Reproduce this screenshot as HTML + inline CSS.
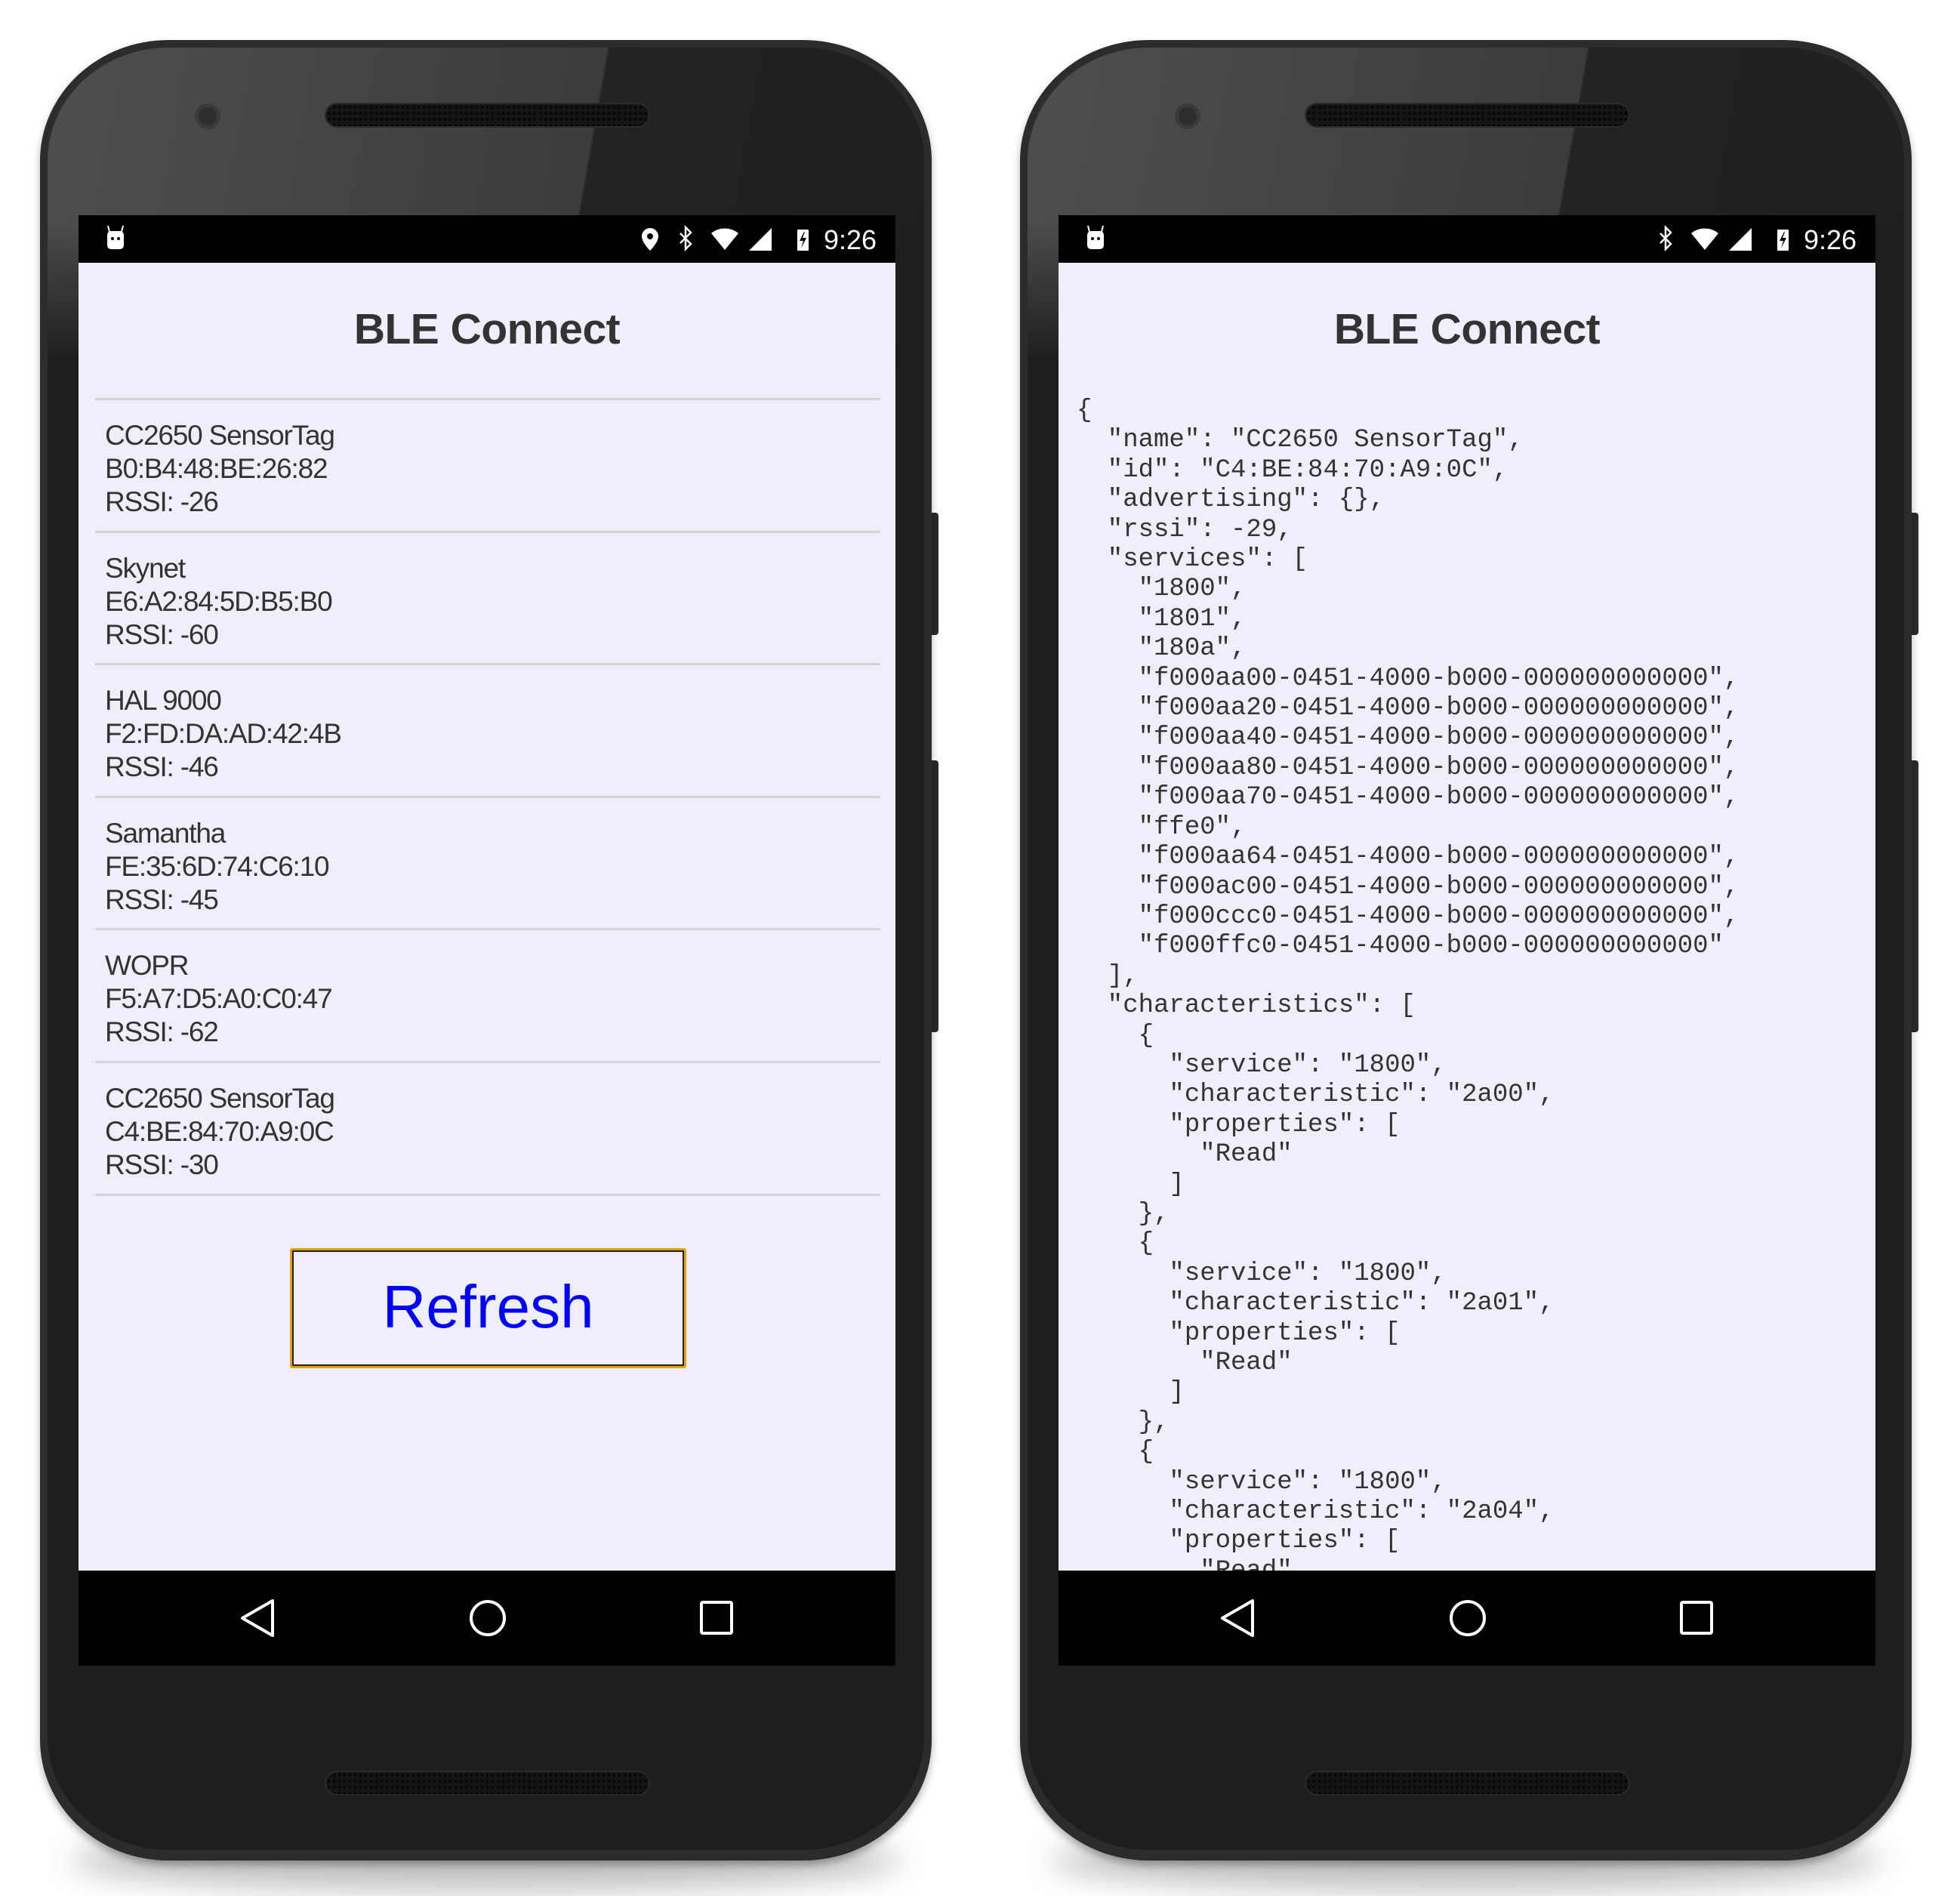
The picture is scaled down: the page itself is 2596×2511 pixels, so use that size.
<!DOCTYPE html>
<html><head><meta charset="utf-8"><style>
*{margin:0;padding:0;box-sizing:border-box}
body{width:2596px;height:2511px;background:#fff;position:relative;overflow:hidden;font-family:"Liberation Sans",sans-serif}
.phone{position:absolute;top:53px;width:1181px;height:2411px}
.shadow{position:absolute;left:40px;right:40px;bottom:-40px;height:80px;border-radius:50%;background:rgba(0,0,0,0.25);filter:blur(20px)}
.body{position:absolute;inset:0;border-radius:170px/160px;background:#2c2c2c;box-shadow:0 6px 10px rgba(0,0,0,.3)}
.face{position:absolute;left:10px;top:10px;right:10px;bottom:14px;border-radius:160px/150px;background:#1e1e1e;overflow:hidden}
.hl{position:absolute;left:0;top:0;width:100%;height:420px;background:linear-gradient(100deg,#4e4e4e 0%,#3c3c3c 60%,#232323 60.3%,#1f1f1f 100%);-webkit-mask-image:linear-gradient(to bottom,#000 55%,transparent 100%);mask-image:linear-gradient(to bottom,#000 55%,transparent 100%)}
.spk{position:absolute;left:377px;width:431px;height:33px;border-radius:17px;background:#151515;border:2px solid #2a2a2a;
background-image:radial-gradient(circle,#050505 1.6px,transparent 2px);background-size:7px 8px}
.cam{position:absolute;left:210px;top:89px;width:24px;height:24px;border-radius:50%;background:#2e2e2e;box-shadow:0 0 0 5px #3a3a3a}
.btn{position:absolute;left:1176px;width:14px;background:#2a2a2a;border-radius:0 4px 4px 0}
.screen{position:absolute;left:51px;top:232px;width:1082px;height:1921px;background:#efeffb;overflow:hidden}
.status{position:absolute;left:0;top:0;width:1082px;height:63px;background:#000}
.nav{position:absolute;left:0;top:1795px;width:1082px;height:126px;background:#000}
.title{position:absolute;left:0;width:1082px;top:112px;text-align:center;font-weight:bold;font-size:57px;color:#333;line-height:78px;letter-spacing:-0.5px}
.div{position:absolute;left:22px;width:1040px;height:3px;background:#d4d4d8}
.item{position:absolute;left:35px;font-size:37px;line-height:44px;color:#333;letter-spacing:-1.2px}
.rbtn{position:absolute;left:280px;top:1368px;width:525px;height:159px;border:3px solid #e5a00f;box-shadow:inset 0 0 0 2px #222;border-radius:3px;text-align:center;line-height:150px;font-size:80px;color:#0000ff}
pre{position:absolute;left:24px;top:240px;font-family:"Liberation Mono",monospace;font-size:34px;line-height:39.4px;color:#333}
</style></head><body>

<!-- LEFT PHONE -->
<div class="phone" style="left:53px">
<div class="shadow"></div>
<div class="btn" style="top:626px;height:162px"></div>
<div class="btn" style="top:954px;height:360px"></div>
<div class="body"><div class="face"><div class="hl"></div></div></div>
<div class="cam"></div>
<div class="spk" style="top:83px"></div>
<div class="spk" style="top:2292px"></div>
<div class="screen">
 <div class="status">
  <svg width="1082" height="63" viewBox="0 0 1082 63">
   <g fill="#fff">
    <rect x="38" y="21" width="22" height="24" rx="5"/>
    <path d="M41 22 L39 14 M57 22 L59 14" stroke="#fff" stroke-width="2"/>
    <circle cx="45" cy="31" r="2" fill="#000"/><circle cx="53" cy="31" r="2" fill="#000"/>
    <path d="M757 17 a11 11 0 0 1 11 11 c0 8 -11 19 -11 19 c0 0 -11 -11 -11 -19 a11 11 0 0 1 11 -11z"/>
    <circle cx="757" cy="28" r="4" fill="#000"/>
    <path d="M797 24 L811 38 L804 45 L804 16 L811 23 L797 37" fill="none" stroke="#fff" stroke-width="2.5"/>
    <path d="M838 24 a28 28 0 0 1 36 0 L856 46 z"/>
    <path d="M888 47 L918 17 L918 47 z"/>
    <rect x="952" y="19" width="15" height="28" rx="1"/>
    <path d="M961 22 L955 34 L960 34 L957 44 L964 30 L959 30 L962 22z" fill="#000"/>
   </g>
   <text x="987" y="45" font-family="Liberation Sans" font-size="36" fill="#fff">9:26</text>
  </svg>
 </div>
 <div class="title">BLE Connect</div>
 <div class="div" style="top:242px"></div>
 <div class="item" style="top:270px">CC2650 SensorTag<br>B0:B4:48:BE:26:82<br>RSSI: -26</div>
 <div class="div" style="top:418px"></div>
 <div class="item" style="top:446px">Skynet<br>E6:A2:84:5D:B5:B0<br>RSSI: -60</div>
 <div class="div" style="top:593px"></div>
 <div class="item" style="top:621px">HAL 9000<br>F2:FD:DA:AD:42:4B<br>RSSI: -46</div>
 <div class="div" style="top:769px"></div>
 <div class="item" style="top:797px">Samantha<br>FE:35:6D:74:C6:10<br>RSSI: -45</div>
 <div class="div" style="top:944px"></div>
 <div class="item" style="top:972px">WOPR<br>F5:A7:D5:A0:C0:47<br>RSSI: -62</div>
 <div class="div" style="top:1120px"></div>
 <div class="item" style="top:1148px">CC2650 SensorTag<br>C4:BE:84:70:A9:0C<br>RSSI: -30</div>
 <div class="div" style="top:1296px"></div>
 <div class="rbtn">Refresh</div>
 <div class="nav">
  <svg width="1082" height="126" viewBox="0 0 1082 126">
   <g fill="none" stroke="#fff" stroke-width="4" stroke-linejoin="round">
    <path d="M257 40 L257 86 L217 63 Z"/>
    <circle cx="542" cy="63" r="22"/>
    <rect x="825" y="42" width="40" height="41" rx="2"/>
   </g>
  </svg>
 </div>
</div>
</div>

<!-- RIGHT PHONE -->
<div class="phone" style="left:1351px">
<div class="shadow"></div>
<div class="btn" style="top:626px;height:162px"></div>
<div class="btn" style="top:954px;height:360px"></div>
<div class="body"><div class="face"><div class="hl"></div></div></div>
<div class="cam"></div>
<div class="spk" style="top:83px"></div>
<div class="spk" style="top:2292px"></div>
<div class="screen">
 <div class="status">
  <svg width="1082" height="63" viewBox="0 0 1082 63">
   <g fill="#fff">
    <rect x="38" y="21" width="22" height="24" rx="5"/>
    <path d="M41 22 L39 14 M57 22 L59 14" stroke="#fff" stroke-width="2"/>
    <circle cx="45" cy="31" r="2" fill="#000"/><circle cx="53" cy="31" r="2" fill="#000"/>
    <path d="M797 24 L811 38 L804 45 L804 16 L811 23 L797 37" fill="none" stroke="#fff" stroke-width="2.5"/>
    <path d="M838 24 a28 28 0 0 1 36 0 L856 46 z"/>
    <path d="M888 47 L918 17 L918 47 z"/>
    <rect x="952" y="19" width="15" height="28" rx="1"/>
    <path d="M961 22 L955 34 L960 34 L957 44 L964 30 L959 30 L962 22z" fill="#000"/>
   </g>
   <text x="987" y="45" font-family="Liberation Sans" font-size="36" fill="#fff">9:26</text>
  </svg>
 </div>
 <div class="title">BLE Connect</div>
<pre>{
  "name": "CC2650 SensorTag",
  "id": "C4:BE:84:70:A9:0C",
  "advertising": {},
  "rssi": -29,
  "services": [
    "1800",
    "1801",
    "180a",
    "f000aa00-0451-4000-b000-000000000000",
    "f000aa20-0451-4000-b000-000000000000",
    "f000aa40-0451-4000-b000-000000000000",
    "f000aa80-0451-4000-b000-000000000000",
    "f000aa70-0451-4000-b000-000000000000",
    "ffe0",
    "f000aa64-0451-4000-b000-000000000000",
    "f000ac00-0451-4000-b000-000000000000",
    "f000ccc0-0451-4000-b000-000000000000",
    "f000ffc0-0451-4000-b000-000000000000"
  ],
  "characteristics": [
    {
      "service": "1800",
      "characteristic": "2a00",
      "properties": [
        "Read"
      ]
    },
    {
      "service": "1800",
      "characteristic": "2a01",
      "properties": [
        "Read"
      ]
    },
    {
      "service": "1800",
      "characteristic": "2a04",
      "properties": [
        "Read"
      ]
    }
  ]
}</pre>
 <div class="nav">
  <svg width="1082" height="126" viewBox="0 0 1082 126">
   <g fill="none" stroke="#fff" stroke-width="4" stroke-linejoin="round">
    <path d="M257 40 L257 86 L217 63 Z"/>
    <circle cx="542" cy="63" r="22"/>
    <rect x="825" y="42" width="40" height="41" rx="2"/>
   </g>
  </svg>
 </div>
</div>
</div>

</body></html>
